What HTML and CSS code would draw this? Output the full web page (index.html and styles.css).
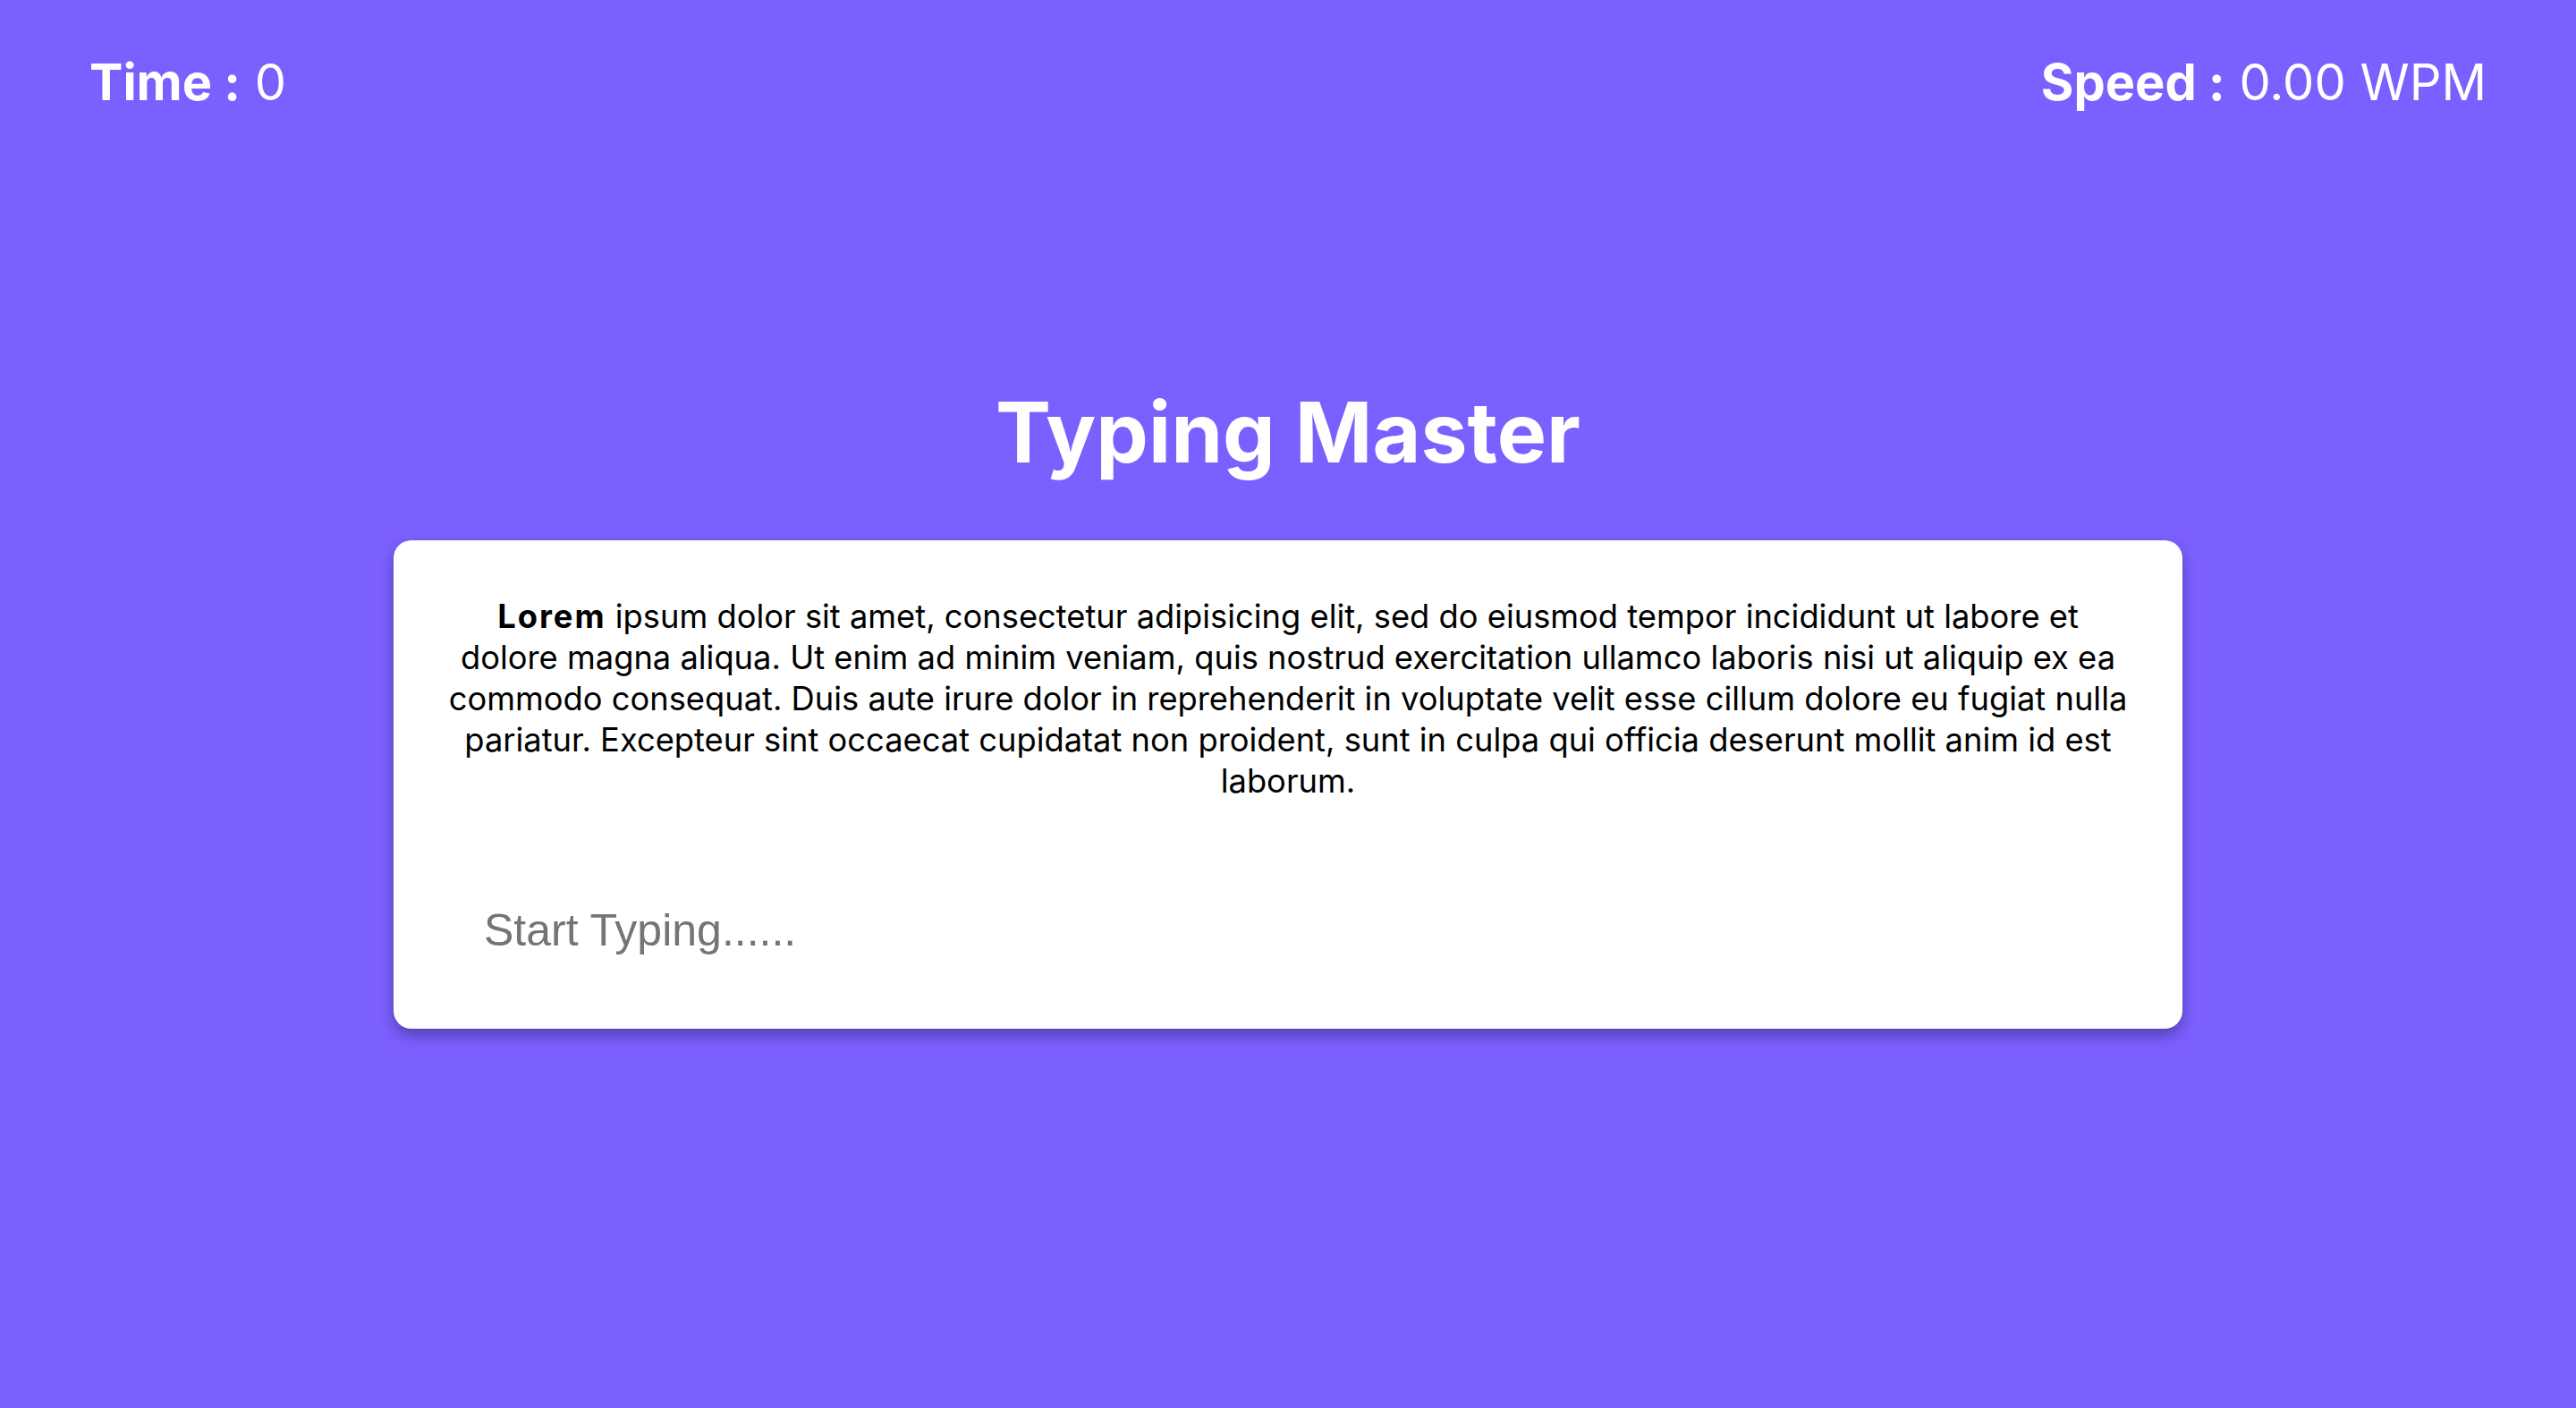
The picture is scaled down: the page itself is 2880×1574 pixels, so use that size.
FILE: index.html
```html
<!DOCTYPE html>
<html lang="en">
<head>
<meta charset="utf-8">
<title>Typing Master</title>
<link rel="stylesheet" href="styles.css">
</head>
<body>
<header class="stats">
  <div class="stat"><b>Time :</b> 0</div>
  <div class="stat"><b>Speed :</b> 0.00 WPM</div>
</header>
<main class="main">
  <h1 class="title">Typing Master</h1>
  <section class="card">
    <p class="passage"><b>Lorem</b> ipsum dolor sit amet, consectetur adipisicing elit, sed do eiusmod tempor incididunt ut labore et dolore magna aliqua. Ut enim ad minim veniam, quis nostrud exercitation ullamco laboris nisi ut aliquip ex ea commodo consequat. Duis aute irure dolor in reprehenderit in voluptate velit esse cillum dolore eu fugiat nulla pariatur. Excepteur sint occaecat cupidatat non proident, sunt in culpa qui officia deserunt mollit anim id est laborum.</p>
    <input class="typing" type="text" placeholder="Start Typing......">
  </section>
</main>
</body>
</html>
```
FILE: styles.css
```css
html, body {
  margin: 0;
  padding: 0;
}
body {
  background: #7c5fff;
  font-family: Inter, "Noto Sans", sans-serif;
  color: #ffffff;
  min-height: 100vh;
}
.stats {
  display: flex;
  justify-content: space-between;
  padding: 58px 100px 0 100px;
}
.stat {
  font-size: 56px;
  font-weight: 400;
}
.stat b {
  font-weight: 700;
}
.main {
  display: flex;
  flex-direction: column;
  align-items: center;
}
.title {
  margin: 299px 0 63px 0;
  font-size: 93px;
  font-weight: 700;
  line-height: 116px;
}
.card {
  box-sizing: border-box;
  width: 2000px;
  height: 546px;
  background: #ffffff;
  border-radius: 20px;
  padding: 62px 61px 60px 61px;
  box-shadow: 0 8px 16px rgba(0, 0, 0, 0.3);
  display: flex;
  flex-direction: column;
}
.passage {
  margin: 0;
  color: #000000;
  font-size: 36.3px;
  line-height: 46px;
  text-align: center;
}
.passage b {
  font-weight: 700;
  letter-spacing: 2px;
}
.typing {
  margin-top: 95px;
  border: none;
  outline: none;
  background: transparent;
  font-family: "Liberation Sans", Arial, sans-serif;
  font-size: 50px;
  padding: 20px 40px;
  color: #000;
}
.typing::placeholder {
  color: #757575;
}
```
